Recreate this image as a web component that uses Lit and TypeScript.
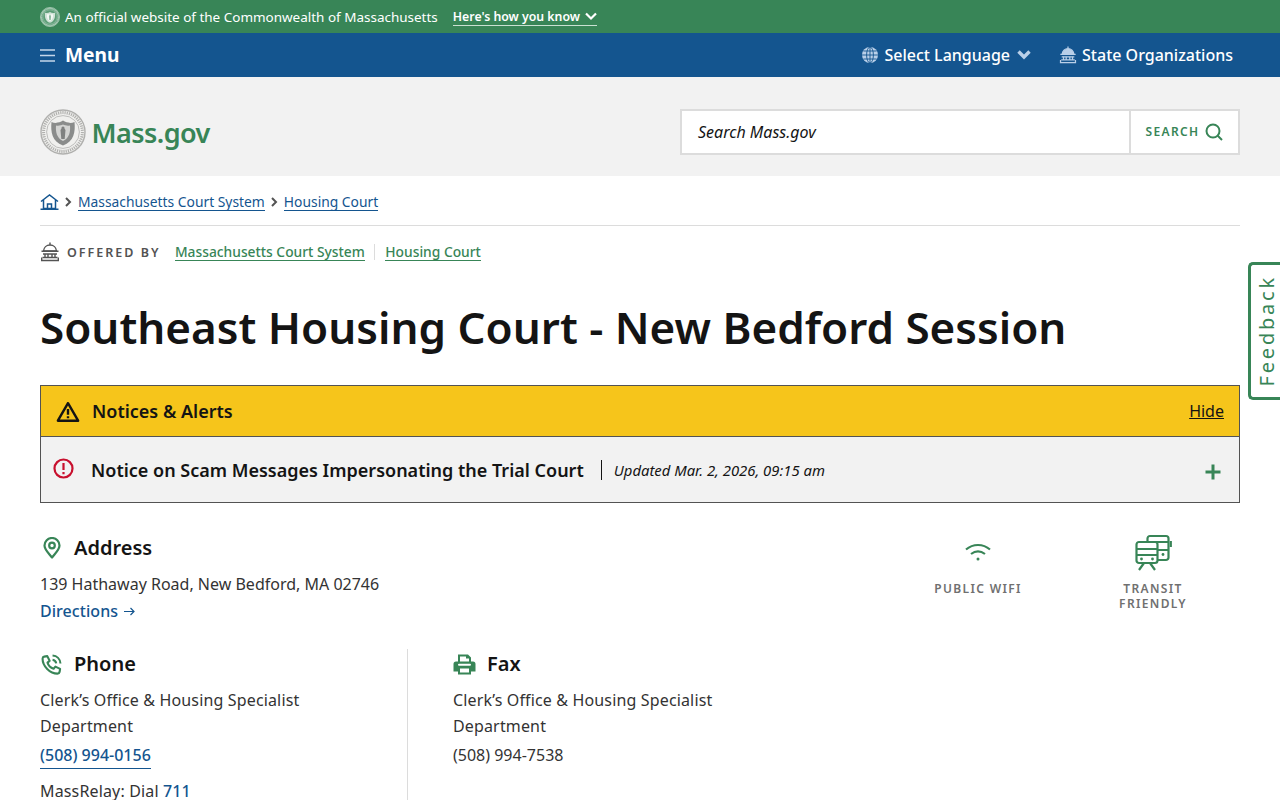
import { LitElement, html, css, svg } from 'lit';
import { customElement } from 'lit/decorators.js';

const GREEN = '#388557';
const PALE = '#b9cfe8';

// state seal, colours differ between the green bar and the masthead
const seal = (size: number, ring: string, bg: string, shield: string, inner: string, figure: string) => html`
  <svg width=${size} height=${size} viewBox="0 0 46 46" aria-hidden="true">
    <circle cx="23" cy="23" r="22" fill=${bg} stroke=${ring} stroke-width="1.4"></circle>
    <circle cx="23" cy="23" r="19.4" fill="none" stroke=${ring} stroke-width="3" stroke-dasharray="1.2 1"></circle>
    <circle cx="23" cy="23" r="16.4" fill=${bg} stroke=${ring} stroke-width=".8"></circle>
    <path d="M11.5 13c4 1.800 8 .6 11.500-1.400 3.500 2 7.500 3.200 11.500 1.400 1 10-.5 19.500-11.500 23.500-11-4-12.500-13.500-11.500-23.500z" fill=${shield}></path>
    <path d="M16 16.500c2.500.5 5 0 7-1 2 1 4.500 1.500 7 1 .5 6-.5 12.500-7 15.500-6.500-3-7.500-9.500-7-15.500z" fill=${inner}></path>
    <path d="M23 17.500c1.200 0 1.700 1 1.500 2l1 1.500-.8 9h-3.400l-.8-9 1-1.500c-.2-1 .3-2 1.500-2z" fill=${figure}></path>
  </svg>`;

// capitol building, solid dome on the dark nav and outlined elsewhere
const capitol = (size: number, color: string, dome: string) => html`
  <svg width=${size} height=${size} viewBox="0 0 20 20" fill="none" stroke=${color} stroke-width="1.400" aria-hidden="true">
    <path d="M10 .5v2.500M3.500 9c.3-3.500 3-6 6.500-6s6.200 2.500 6.500 6z" fill=${dome} stroke-linejoin="round"></path>
    <path d="M1.500 9.300h17M3 12h14M1 18.500h18M2.500 15.500h15"></path>
    <path d="M5 12v3.500M8 12v3.500M12 12v3.500M15 12v3.500"></path>
    <path d="M1.700 18v-2.500M18.300 18v-2.500"></path>
  </svg>`;

const ICONS = {
  menu: svg`<path d="M0 1h15M0 6.500h15M0 12h15" stroke="#c4d6ea" stroke-width="1.600"></path>`,
  globe: svg`<circle cx="9" cy="9" r="8" fill="${PALE}"></circle><g fill="none" stroke="#14558f" stroke-width=".9"><ellipse cx="9" cy="9" rx="3.400" ry="8"></ellipse><path d="M9 1v16M1 9h16M2.400 5h13.200M2.400 13h13.200"></path></g>`,
  pin: svg`<path d="M9 20.500C5 15.500 1.500 12.500 1.500 8.500a7.500 7.500 0 0 1 15 0c0 4-3.500 7-7.500 12z" stroke-linejoin="round"></path><circle cx="9" cy="8.500" r="2.800"></circle>`,
  phone: svg`<path d="M3 2.500 6 2l2.200 4.500-2 1.700c.8 2.700 3.100 5 5.800 5.800l1.700-2 4.500 2.200-.5 3c-.2 1-1 1.500-2 1.500C8.500 18.700 1.500 11.500 1.500 4.500c0-1 .5-1.800 1.500-2z" stroke-linejoin="round"></path><path d="M11 5.500c2 .3 3.200 1.500 3.500 3.500M11 1.500c4.200.3 7.200 3.300 7.500 7.500"></path>`,
};

@customElement('app-root')
export class AppRoot extends LitElement {
  static styles = css`
    :host {
      display: block;
      position: relative;
      height: 800px;
      overflow: hidden;
      background: #fff;
      font-family: 'Noto Sans', sans-serif;
      color: #141414;
    }
    a {
      color: inherit;
      text-decoration: none;
    }
    svg {
      display: block;
      flex: none;
    }
    .official {
      height: 33px;
      background: #388557;
      display: flex;
      align-items: center;
      padding: 0 40px;
      color: #fff;
      font-size: 13.47px;
    }
    .official .txt {
      margin-left: 5px;
    }
    .official a {
      display: flex;
      align-items: center;
      gap: 5px;
      margin-left: 15px;
      font-size: 12.3px;
      font-weight: 600;
      height: 18px;
      border-bottom: 1px solid #c9e0d2;
    }
    .nav {
      height: 44px;
      background: #14558f;
      display: flex;
      align-items: center;
      padding: 0 47px 0 40px;
      color: #fff;
    }
    .nav .menu {
      display: flex;
      align-items: center;
      gap: 10px;
      font-size: 19.2px;
      font-weight: 700;
      line-height: 24px;
    }
    .nav .right {
      margin-left: auto;
      display: flex;
      align-items: center;
      font-size: 16px;
      font-weight: 500;
    }
    .nav .item {
      display: flex;
      align-items: center;
      gap: 5px;
    }
    .nav .lang {
      margin-right: 28px;
    }
    .nav .lang svg:last-child {
      margin-left: 2px;
    }
    .masthead {
      height: 99px;
      box-sizing: border-box;
      padding: 11px 40px 0;
      background: #f2f2f2;
      display: flex;
      align-items: center;
      justify-content: space-between;
    }
    .logo {
      display: flex;
      align-items: center;
      gap: 5.5px;
      color: #388557;
      font-size: 27px;
      font-weight: 600;
      letter-spacing: -0.55px;
    }
    .search {
      width: 560px;
      height: 46px;
      box-sizing: border-box;
      border: 2px solid #dcdcdc;
      background: #fff;
      display: flex;
      align-items: center;
    }
    .search .field {
      flex: 1;
      padding-left: 16px;
      font-size: 16px;
      font-style: italic;
    }
    .search .btn {
      width: 109px;
      height: 100%;
      box-sizing: border-box;
      border-left: 2px solid #dcdcdc;
      display: flex;
      align-items: center;
      justify-content: center;
      gap: 6px;
      color: #388557;
      font-size: 12px;
      font-weight: 600;
      letter-spacing: 1.35px;
    }
    .search .btn span {
      margin-top: -2px;
    }
    .main {
      padding: 0 40px;
    }
    .crumbs {
      height: 47px;
      border-bottom: 1px solid #dcdcdc;
      display: flex;
      align-items: center;
      gap: 6px;
      color: #14558f;
      font-size: 13.85px;
      padding-top: 3px;
      margin-top: -1px;
    }
    .crumbs a,
    .offered a {
      border-bottom: 1px solid currentColor;
      line-height: 17px;
    }
    .offered {
      display: flex;
      align-items: center;
      height: 52px;
      font-size: 13.8px;
      font-weight: 500;
    }
    .offered .label {
      margin: 0 14.5px 0 7px;
      color: #535353;
      font-size: 12.5px;
      font-weight: 600;
      letter-spacing: 2px;
    }
    .offered a {
      color: #388557;
    }
    .offered .sep {
      width: 1px;
      height: 16px;
      background: #dcdcdc;
      margin: 0 10px 0 9.5px;
    }
    h1 {
      margin: 20px 0 0;
      font-size: 44px;
      line-height: 58px;
      font-weight: 600;
    }
    .alerts {
      margin-top: 29px;
      border: 1px solid #535353;
      background: #f2f2f2;
    }
    .alerts .head {
      height: 50px;
      background: #f6c51b;
      border-bottom: 1px solid #535353;
      display: flex;
      align-items: center;
      padding: 0 15px;
      font-size: 18px;
      font-weight: 600;
    }
    .alerts .head svg {
      margin-right: 12px;
    }
    .alerts .head a {
      margin-left: auto;
      font-size: 16px;
      font-weight: 400;
      text-decoration: underline;
    }
    .alerts .row {
      height: 65px;
      display: flex;
      align-items: center;
      padding: 0 18px 0 12px;
    }
    .alerts .row .t {
      margin-left: 17px;
      font-size: 18px;
      font-weight: 600;
    }
    .alerts .row .d {
      margin: 1px 0 0 17px;
      padding-left: 12px;
      border-left: 1px solid #141414;
      font-size: 14.85px;
      font-style: italic;
      line-height: 20px;
    }
    .alerts .row svg:first-child {
      margin-top: -2px;
    }
    .alerts .row svg:last-child {
      margin: 4px 0 0 auto;
    }
    .info {
      display: flex;
      justify-content: space-between;
      margin-top: 31px;
    }
    h2 {
      margin: 0;
      display: flex;
      align-items: center;
      font-size: 20px;
      font-weight: 600;
      line-height: 28px;
    }
    h2 .ico {
      width: 34px;
      flex: none;
    }
    h2 .pin {
      margin-left: 3px;
    }
    h2 .phone {
      margin-left: 1px;
    }
    .body {
      font-size: 16px;
      line-height: 26px;
      color: #333;
    }
    .link {
      color: #14558f;
      font-weight: 500;
    }
    .address .body {
      margin-top: 9px;
    }
    .address .dir {
      margin-top: 1px;
      display: flex;
      align-items: center;
      gap: 6px;
      letter-spacing: 0.05px;
    }
    .amenities {
      display: flex;
      margin-right: 17px;
    }
    .amenity {
      width: 140px;
      margin-left: 35px;
      display: flex;
      flex-direction: column;
      align-items: center;
      color: #707070;
      font-size: 12px;
      font-weight: 600;
      letter-spacing: 1.35px;
      line-height: 15px;
      text-align: center;
    }
    .amenity svg {
      margin-bottom: 9px;
    }
    .contact {
      display: grid;
      grid-template-columns: 367px 340px;
      margin-top: 25px;
    }
    .contact .col {
      height: 200px;
    }
    .contact .col + .col {
      border-left: 1px solid #dcdcdc;
      padding-left: 45px;
    }
    .contact h2 {
      margin-top: 1px;
    }
    .clerk {
      margin-top: 9px;
      width: 290px;
      letter-spacing: 0.15px;
    }
    .tel {
      display: inline-block;
      margin-top: 4px;
      line-height: 25px;
      border-bottom: 1px solid #14558f;
    }
    .fax-no {
      margin-top: 3px;
    }
    .relay {
      margin-top: 13px;
      line-height: 18px;
      letter-spacing: 0.15px;
    }
    .feedback {
      position: absolute;
      right: 0;
      top: 262px;
      width: 29px;
      height: 132px;
      border: 3px solid #388557;
      border-right: 0;
      border-radius: 5px 0 0 5px;
      background: #fff;
      display: flex;
      align-items: center;
      justify-content: center;
      color: #388557;
      font-size: 20px;
      letter-spacing: 2.8px;
    }
    .feedback span {
      writing-mode: vertical-rl;
      transform: rotate(180deg);
      margin-left: 2px;
    }
  `;

  render() {
    return html`
      <div class="official">
        ${seal(20, '#cfe2d6', '#5a9c75', '#cfe2d6', '#f4f8f5', '#8fbba1')}
        <span class="txt">An official website of the Commonwealth of Massachusetts</span>
        <a>Here's how you know
          <svg width="12" height="9" viewBox="0 0 12 9" fill="none" stroke="#fff" stroke-width="2.200"><path d="M1 1.500l5 5 5-5"></path></svg>
        </a>
      </div>
      <div class="nav">
        <a class="menu">
          <svg width="15" height="13" viewBox="0 0 15 13">${ICONS.menu}</svg>
          Menu
        </a>
        <div class="right">
          <a class="item lang">
            <svg width="18" height="18" viewBox="0 0 18 18">${ICONS.globe}</svg>
            Select Language
            <svg width="14" height="10" viewBox="0 0 14 10" fill="none" stroke=${PALE} stroke-width="3.400"><path d="M1.500 1.500 7 7l5.500-5.500"></path></svg>
          </a>
          <a class="item">${capitol(18, PALE, PALE)}State Organizations</a>
        </div>
      </div>
      <header class="masthead">
        <a class="logo">${seal(46, '#b0b0ae', '#f0f0ee', '#8a8c8b', '#d3d4d2', '#7f8180')}Mass.gov</a>
        <div class="search">
          <div class="field">Search Mass.gov</div>
          <div class="btn"><span>SEARCH</span>
            <svg width="18" height="18" viewBox="0 0 18 18" fill="none" stroke="#388557" stroke-width="2"><circle cx="8" cy="8" r="6.500"></circle><path d="M12.500 12.500 17 17"></path></svg>
          </div>
        </div>
      </header>
      <main class="main">
        <nav class="crumbs">
          <svg width="19" height="16" viewBox="0 0 19 16" fill="none" stroke="#14558f" stroke-width="1.500"><path d="M1 7.500 9.500 1 18 7.500M3.500 6v8.500h12V6M7.500 14.500V10h4v4.500M.5 15.200h18"></path></svg>
          <svg width="7" height="10" viewBox="0 0 7 10" fill="none" stroke="#535353" stroke-width="2"><path d="M1 1l4 4-4 4"></path></svg>
          <a>Massachusetts Court System</a>
          <svg width="7" height="10" viewBox="0 0 7 10" fill="none" stroke="#535353" stroke-width="2"><path d="M1 1l4 4-4 4"></path></svg>
          <a>Housing Court</a>
        </nav>
        <div class="offered">
          ${capitol(20, '#535353', 'none')}
          <span class="label">OFFERED BY</span>
          <a>Massachusetts Court System</a>
          <span class="sep"></span>
          <a>Housing Court</a>
        </div>
        <h1>Southeast Housing Court - New Bedford Session</h1>
        <section class="alerts">
          <div class="head">
            <svg width="24" height="21" viewBox="0 0 23 20" fill="none" stroke="#141414" stroke-width="2.300"><path d="M11.500 2 1.800 18.800h19.400z" stroke-linejoin="round"></path><path d="M11.500 7.500v5.500M11.500 14.500v2"></path></svg>
            Notices &amp; Alerts
            <a>Hide</a>
          </div>
          <div class="row">
            <svg width="21" height="21" viewBox="0 0 21 21" fill="none" stroke="#c8102e" stroke-width="2.200"><circle cx="10.500" cy="10.500" r="9"></circle><path d="M10.500 5v7M10.500 14v2.200"></path></svg>
            <span class="t">Notice on Scam Messages Impersonating the Trial Court</span>
            <span class="d">Updated Mar. 2, 2026, 09:15 am</span>
            <svg width="16" height="16" viewBox="0 0 16 16" fill="none" stroke="#388557" stroke-width="3"><path d="M8 .5v15M.5 8h15"></path></svg>
          </div>
        </section>
        <div class="info">
          <div class="address">
            <h2><span class="ico"><svg class="pin" width="18" height="22" viewBox="0 0 18 22" fill="none" stroke=${GREEN} stroke-width="2.200">${ICONS.pin}</svg></span>Address</h2>
            <div class="body">139 Hathaway Road, New Bedford, MA 02746</div>
            <div class="body link dir">Directions
              <svg width="11" height="9" viewBox="0 0 11 9" fill="none" stroke="#14558f" stroke-width="1.200"><path d="M0 4.500h10M6.500 1l3.500 3.500L6.500 8"></path></svg>
            </div>
          </div>
          <div class="amenities">
            <div class="amenity">
              <svg width="28" height="38" viewBox="0 0 28 38" fill="none" stroke=${GREEN} stroke-width="2.200">
                <path d="M2 15.500c7-6 17-6 24 0M7 20c4.500-3.500 9.500-3.500 14 0"></path>
                <circle cx="14" cy="25" r="1.500" fill=${GREEN} stroke="none"></circle>
              </svg>
              PUBLIC WIFI
            </div>
            <div class="amenity">
              <svg width="38" height="38" viewBox="0 0 38 38" fill="none" stroke=${GREEN} stroke-width="2.200">
                <rect x="2.500" y="8" width="21" height="21" rx="2.500"></rect>
                <path d="M2.500 15h21M2.500 21h21M5 36l5-7M21 36l-5-7"></path>
                <path d="M13.500 8V4.500A2.500 2.500 0 0 1 16 2h16a2.500 2.500 0 0 1 2.500 2.500V23.500A2.500 2.500 0 0 1 32 26h-8.500M14 8h20.500M23.500 16h11"></path>
                <path d="M36.800 7v6"></path>
                <circle cx="7.500" cy="25" r="1.400" fill=${GREEN} stroke="none"></circle>
                <circle cx="18.500" cy="25" r="1.400" fill=${GREEN} stroke="none"></circle>
                <circle cx="29" cy="20.500" r="1.400" fill=${GREEN} stroke="none"></circle>
              </svg>
              <span>TRANSIT<br />FRIENDLY</span>
            </div>
          </div>
        </div>
        <div class="contact">
          <div class="col">
            <h2><span class="ico"><svg class="phone" width="21" height="21" viewBox="0 0 20 20" fill="none" stroke=${GREEN} stroke-width="2">${ICONS.phone}</svg></span>Phone</h2>
            <div class="body clerk">Clerk’s Office &amp; Housing Specialist Department</div>
            <a class="body link tel">(508) 994-0156</a>
            <div class="body relay">MassRelay: Dial <span class="link">711</span></div>
          </div>
          <div class="col">
            <h2>
              <span class="ico">
                <svg width="23" height="23" viewBox="0 0 23 22" fill=${GREEN}>
                  <path d="M5 1h10l3 3v4h-2V5h-3V3H7v5H5zM3 8h17a2.500 2.500 0 0 1 2.500 2.500V18H18v3H5v-3H.5v-7.500A2.500 2.500 0 0 1 3 8zm4 7v4h9v-4zm-1-4.800a1 1 0 1 0 0 2h11a1 1 0 1 0 0-2z" fill-rule="evenodd"></path>
                </svg>
              </span>
              Fax
            </h2>
            <div class="body clerk">Clerk’s Office &amp; Housing Specialist Department</div>
            <div class="body fax-no">(508) 994-7538</div>
          </div>
        </div>
      </main>
      <a class="feedback"><span>Feedback</span></a>
    `;
  }
}
